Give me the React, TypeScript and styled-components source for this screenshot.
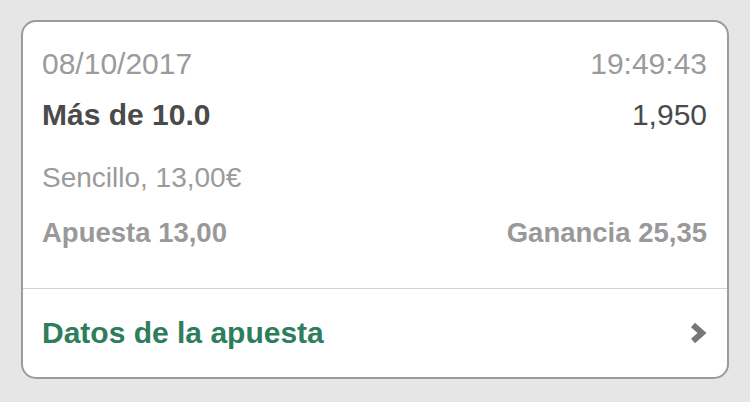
import React from "react";
import styled, { createGlobalStyle } from "styled-components";

const GlobalStyle = createGlobalStyle`
  html, body {
    margin: 0;
    padding: 0;
    background: #e6e6e6;
  }
  body {
    font-family: "Liberation Sans", Arial, Helvetica, sans-serif;
  }
`;

const Page = styled.div`
  width: 750px;
  height: 402px;
  box-sizing: border-box;
  padding: 20px 21px 23px 21px;
  background: #e6e6e6;
`;

const Card = styled.div`
  height: 100%;
  box-sizing: border-box;
  background: #ffffff;
  border: 2px solid #9b9b9b;
  border-radius: 15px;
  display: flex;
  flex-direction: column;
  overflow: hidden;
`;

const Body = styled.div`
  display: flex;
  flex-direction: column;
  padding: 24px 20px 37px 19px;
  border-bottom: 1.5px solid #d4d4d4;
`;

const Row = styled.div<{ $gap?: number }>`
  display: flex;
  justify-content: space-between;
  align-items: baseline;
  height: 36px;
  margin-top: ${(p) => p.$gap ?? 0}px;
`;

const Text = styled.span<{ $size: number; $bold?: boolean; $color: string }>`
  font-size: ${(p) => p.$size}px;
  line-height: 36px;
  font-weight: ${(p) => (p.$bold ? 700 : 400)};
  color: ${(p) => p.$color};
  white-space: nowrap;
`;

const Footer = styled.div`
  display: flex;
  justify-content: space-between;
  align-items: center;
  padding: 26px 20px 26px 19px;
`;

const Link = styled.span`
  font-size: 30px;
  line-height: 36px;
  font-weight: 700;
  color: #2e7d5c;
`;

const Chevron = styled.svg`
  width: 18px;
  height: 26px;
  display: block;
`;

export default function App() {
  return (
    <>
      <GlobalStyle />
      <Page>
        <Card>
          <Body>
            <Row>
              <Text $size={30} $color="#9b9b9b">08/10/2017</Text>
              <Text $size={30} $color="#9b9b9b">19:49:43</Text>
            </Row>
            <Row $gap={15}>
              <Text $size={30} $bold $color="#4a4a4a">Más de 10.0</Text>
              <Text $size={30} $color="#4a4a4a">1,950</Text>
            </Row>
            <Row $gap={26.6}>
              <Text $size={28} $color="#9b9b9b">Sencillo, 13,00€</Text>
            </Row>
            <Row $gap={19}>
              <Text $size={27.5} $bold $color="#999999">Apuesta 13,00</Text>
              <Text $size={27.5} $bold $color="#999999">Ganancia 25,35</Text>
            </Row>
          </Body>
          <Footer>
            <Link>Datos de la apuesta</Link>
            <Chevron viewBox="0 0 18 26">
              <path d="M4 5 L13 13 L4 21" fill="none" stroke="#777777" strokeWidth="6" strokeLinecap="butt" strokeLinejoin="miter" />
            </Chevron>
          </Footer>
        </Card>
      </Page>
    </>
  );
}
